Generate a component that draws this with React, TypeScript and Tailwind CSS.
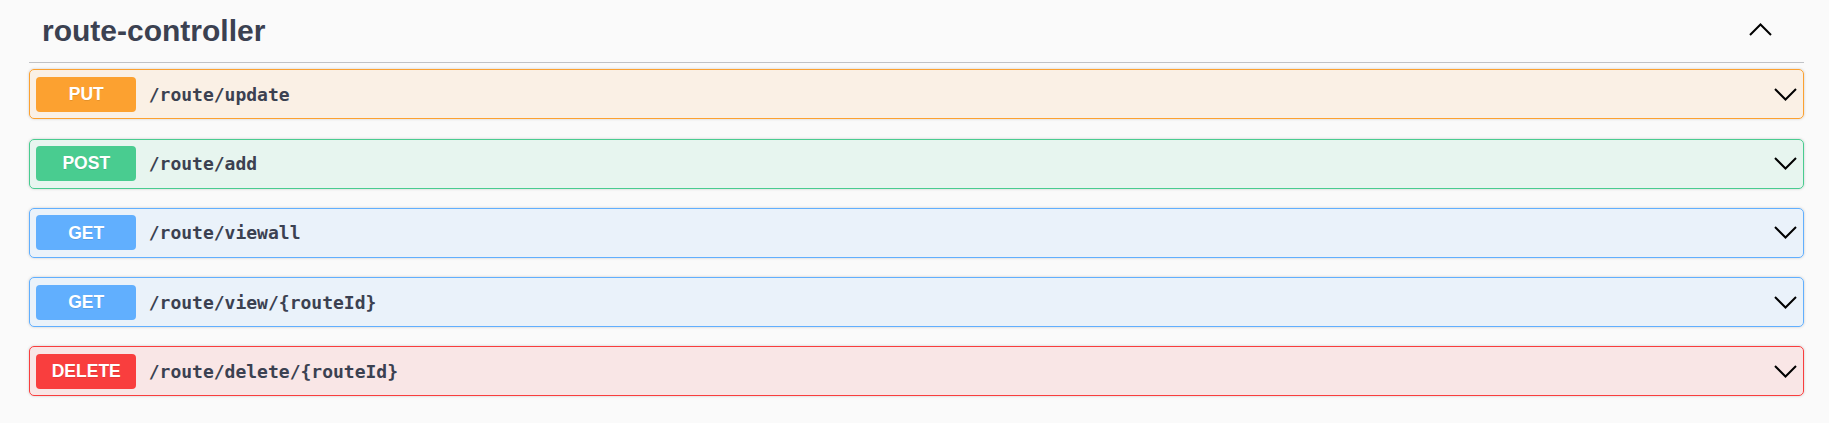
const routes = [
  { method: 'PUT', path: '/route/update', badge: 'bg-[#fca130]', box: 'border-[#fca130] bg-[#fca130]/10' },
  { method: 'POST', path: '/route/add', badge: 'bg-[#49cc90]', box: 'border-[#49cc90] bg-[#49cc90]/10' },
  { method: 'GET', path: '/route/viewall', badge: 'bg-[#61affe]', box: 'border-[#61affe] bg-[#61affe]/10' },
  { method: 'GET', path: '/route/view/{routeId}', badge: 'bg-[#61affe]', box: 'border-[#61affe] bg-[#61affe]/10' },
  { method: 'DELETE', path: '/route/delete/{routeId}', badge: 'bg-[#f93e3e]', box: 'border-[#f93e3e] bg-[#f93e3e]/10' },
];

function Chevron({ up }: { up?: boolean }) {
  return (
    <svg width="23" height="13" viewBox="0 0 23 13" className="shrink-0">
      <polyline
        points={up ? '1,12 11.5,1.5 22,12' : '1,1 11.5,11.5 22,1'}
        fill="none"
        stroke="#000"
        strokeWidth="2"
      />
    </svg>
  );
}

export default function App() {
  return (
    <div className="min-h-[423px] bg-[#fafafa] pl-[29px] pr-[25px]">
      <div className="flex h-[63px] items-center justify-between border-b border-[#3b4151]/30 pl-[13px] pr-[32px] mb-[6.25px]">
        <h3 className="text-[30px] leading-[30px] font-bold text-[#3b4151] font-['Liberation_Sans',Arial,sans-serif]">
          route-controller
        </h3>
        <div className="-mt-[4px]">
          <Chevron up />
        </div>
      </div>

      <div className="flex flex-col gap-[19.25px]">
        {routes.map((r, i) => (
          <div
            key={i}
            className={`flex h-[50px] items-center rounded-[5px] border px-[6.25px] shadow-[0_0_3px_rgba(0,0,0,0.19)] ${r.box}`}
          >
            <span
              className={`flex h-[35px] w-[100px] shrink-0 items-center justify-center rounded-[4px] text-[17.5px] font-bold text-white [text-shadow:0_1px_0_rgba(0,0,0,0.1)] font-['Liberation_Sans',Arial,sans-serif] ${r.badge}`}
            >
              {r.method}
            </span>
            <span className="flex-1 px-[12.5px] text-[18px] font-bold text-[#3b4151] font-['DejaVu_Sans_Mono',monospace]">
              {r.path}
            </span>
            <Chevron />
          </div>
        ))}
      </div>
    </div>
  );
}
